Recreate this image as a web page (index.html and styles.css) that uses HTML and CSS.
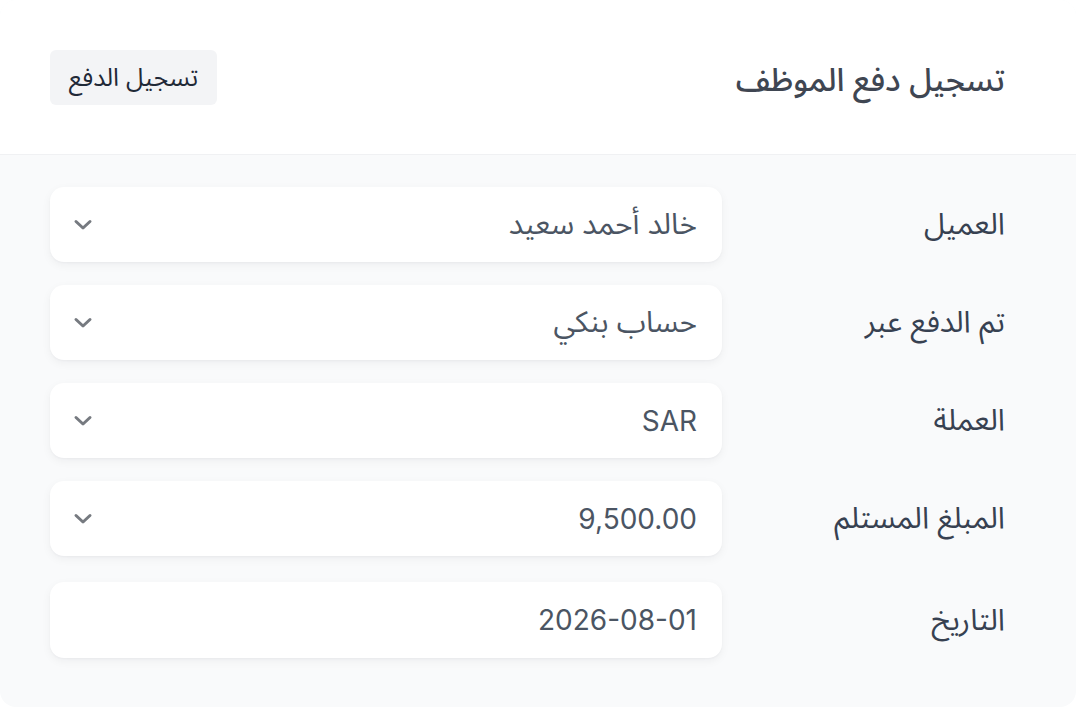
FILE: index.html
```html
<!DOCTYPE html>
<html lang="ar" dir="rtl">
<head>
<meta charset="utf-8">
<title>تسجيل دفع الموظف</title>
<link rel="stylesheet" href="styles.css">
</head>
<body>
<div class="card">
  <div class="card-header">
    <h2 class="title">تسجيل دفع الموظف</h2>
    <button class="btn" type="button">تسجيل الدفع</button>
  </div>
  <div class="card-body">
    <div class="row">
      <div class="label">العميل</div>
      <div class="field">
        <span class="value value-ar">خالد أحمد سعيد</span>
        <svg class="chev" viewBox="0 0 20 12" width="20" height="12"><polyline points="3,2.5 10,9 17,2.5" fill="none" stroke="currentColor" stroke-width="3" stroke-linecap="round" stroke-linejoin="round"/></svg>
      </div>
    </div>
    <div class="row">
      <div class="label">تم الدفع عبر</div>
      <div class="field">
        <span class="value value-ar">حساب بنكي</span>
        <svg class="chev" viewBox="0 0 20 12" width="20" height="12"><polyline points="3,2.5 10,9 17,2.5" fill="none" stroke="currentColor" stroke-width="3" stroke-linecap="round" stroke-linejoin="round"/></svg>
      </div>
    </div>
    <div class="row">
      <div class="label">العملة</div>
      <div class="field">
        <span class="value">SAR</span>
        <svg class="chev" viewBox="0 0 20 12" width="20" height="12"><polyline points="3,2.5 10,9 17,2.5" fill="none" stroke="currentColor" stroke-width="3" stroke-linecap="round" stroke-linejoin="round"/></svg>
      </div>
    </div>
    <div class="row">
      <div class="label">المبلغ المستلم</div>
      <div class="field">
        <span class="value">9,500.00</span>
        <svg class="chev" viewBox="0 0 20 12" width="20" height="12"><polyline points="3,2.5 10,9 17,2.5" fill="none" stroke="currentColor" stroke-width="3" stroke-linecap="round" stroke-linejoin="round"/></svg>
      </div>
    </div>
    <div class="row row-last">
      <div class="label">التاريخ</div>
      <div class="field field-date">
        <span class="value">2026-08-01</span>
      </div>
    </div>
  </div>
</div>
</body>
</html>
```
FILE: styles.css
```css
html, body {
  margin: 0;
  padding: 0;
  background: #ffffff;
}
body {
  font-family: "Inter", "Noto Sans Arabic", "Noto Sans Arabic UI", "Noto Naskh Arabic", "Noto Sans", "DejaVu Sans", sans-serif;
  color: #374151;
}
.card {
  width: 1076px;
  height: 707px;
  border-radius: 16px;
  overflow: hidden;
  background: #f9fafb;
  display: flex;
  flex-direction: column;
}
.card-header {
  background: #ffffff;
  height: 155px;
  box-sizing: border-box;
  border-bottom: 1px solid #f0f1f3;
  display: flex;
  align-items: center;
  justify-content: space-between;
  padding: 0 71px 0 50px;
}
.title {
  margin: 0;
  font-size: 32px;
  font-weight: 500;
  color: #3f4652;
  line-height: 1.2;
  padding-top: 6px;
}
.btn {
  font-family: inherit;
  font-size: 25px;
  color: #1f2937;
  background: #f3f4f6;
  border: none;
  border-radius: 6px;
  height: 55px;
  width: 167px;
  padding: 0;
  line-height: 1;
}
.card-body {
  padding: 32px 71px 0 50px;
  display: flex;
  flex-direction: column;
  gap: 23px;
}
.row {
  display: grid;
  grid-template-columns: 1fr 672px;
  align-items: center;
}
.row-last {
  margin-top: 3px;
}
.label {
  font-size: 30px;
  color: #374151;
}
.field {
  height: 75px;
  box-sizing: border-box;
  background: #ffffff;
  border-radius: 14px;
  box-shadow: 0 3px 10px rgba(17, 24, 39, 0.05), 0 1px 2px rgba(17, 24, 39, 0.03);
  display: flex;
  align-items: center;
  justify-content: space-between;
  padding: 0 25px 0 23px;
  color: #4b5563;
  font-size: 28px;
}
.value-ar {
  font-size: 29.5px;
}
.field-date {
  height: 76px;
}
.chev {
  color: #767a80;
  width: 20px;
  height: 12px;
  display: block;
}
```
